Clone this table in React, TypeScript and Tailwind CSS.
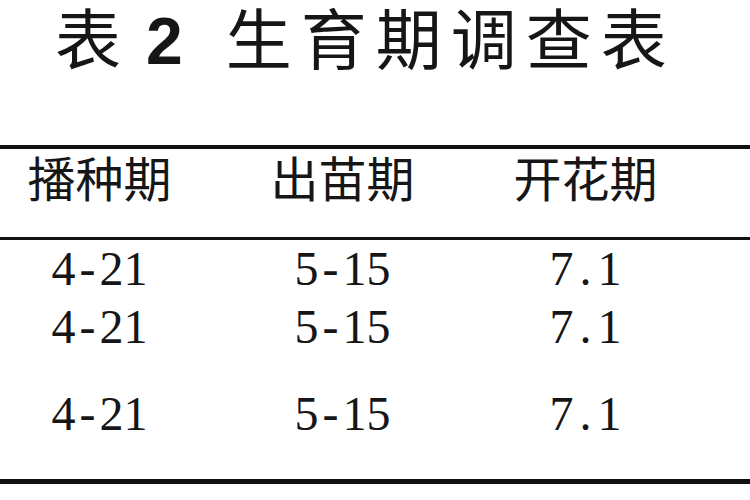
import React from "react";

const cols = ["播种期", "出苗期", "开花期"];
const rows = [
  { sow: "4-21", emerge: "5-15", bloom: "7.1", gap: "mt-[5px]" },
  { sow: "4-21", emerge: "5-15", bloom: "7.1", gap: "mt-[10px]" },
  { sow: "4-21", emerge: "5-15", bloom: "7.1", gap: "mt-[39px]" },
];

// half-width cells, like a Song-style table font
function Mono({ text }: { text: string }) {
  return (
    <span className="inline-flex">
      {text.split("").map((c, i) => (
        <span key={i} className="inline-block w-[24px] text-center">
          {c}
        </span>
      ))}
    </span>
  );
}

export default function App() {
  return (
    <div className="relative h-[500px] w-[750px] overflow-hidden bg-white text-[#161616]">
      <div className="flex h-[145px] items-baseline pl-[55px] pt-[2px] font-['Noto_Sans_CJK_SC',sans-serif] leading-none">
        <span className="text-[66px]">表</span>
        <span className="ml-[25px] font-['Liberation_Sans',Arial,sans-serif] text-[66px] font-bold">2</span>
        <span className="ml-[43px] text-[66px] tracking-[9px]">生育期调查表</span>
      </div>

      <div className="border-t-4 border-[#111]" />
      <div className="-ml-[22px] grid h-[88px] w-[972px] grid-cols-4 pt-[3px] font-['Noto_Sans_CJK_SC',sans-serif] text-[48px] leading-none">
        {cols.map((c) => (
          <div key={c} className="text-center">
            {c}
          </div>
        ))}
      </div>
      <div className="border-t-[3px] border-[#111]" />

      <div className="h-[234px] font-['Liberation_Serif','Times_New_Roman',serif] text-[48px] leading-none">
        {rows.map((r, i) => (
          <div key={i} className={`-ml-[22px] grid w-[972px] grid-cols-4 ${r.gap}`}>
            <div className="text-center"><Mono text={r.sow} /></div>
            <div className="text-center"><Mono text={r.emerge} /></div>
            <div className="text-center"><Mono text={r.bloom} /></div>
          </div>
        ))}
      </div>
      <div className="border-t-[5px] border-[#111]" />
    </div>
  );
}
